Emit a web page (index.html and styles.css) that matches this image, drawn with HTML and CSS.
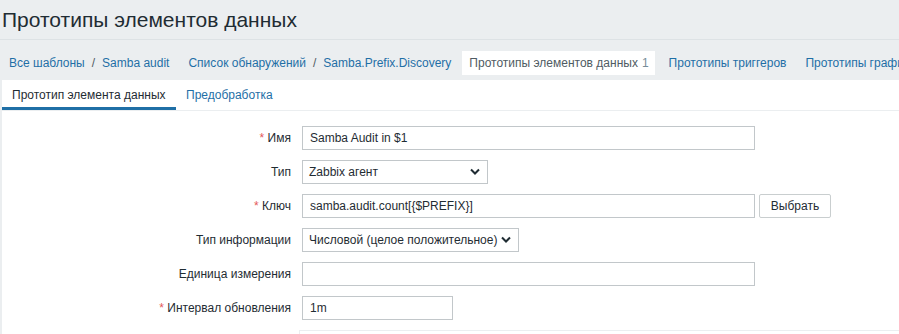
FILE: index.html
```html
<!DOCTYPE html>
<html lang="ru">
<head>
<meta charset="utf-8">
<title>Прототипы элементов данных</title>
<link rel="stylesheet" href="styles.css">
</head>
<body>
<header class="page-header">
  <h1 class="page-title">Прототипы элементов данных</h1>
</header>
<nav class="breadcrumbs">
  <div class="crumb-group">
    <a class="link" href="#">Все шаблоны</a><span class="sep">/</span><a class="link" href="#">Samba audit</a>
  </div>
  <div class="crumb-group">
    <a class="link" href="#">Список обнаружений</a><span class="sep">/</span><a class="link" href="#">Samba.Prefix.Discovery</a>
  </div>
  <div class="crumb-group selected">
    <span class="sel-text">Прототипы элементов данных</span><span class="count">1</span>
  </div>
  <div class="crumb-group">
    <a class="link" href="#">Прототипы триггеров</a>
  </div>
  <div class="crumb-group">
    <a class="link" href="#">Прототипы графиков</a>
  </div>
</nav>
<main class="content">
  <div class="tabs">
    <a class="tab active" href="#">Прототип элемента данных</a>
    <a class="tab" href="#">Предобработка</a>
  </div>
  <form class="form">
    <div class="row">
      <label class="label"><span class="req">*</span> Имя</label>
      <div class="field"><input class="input wide" type="text" value="Samba Audit in $1"></div>
    </div>
    <div class="row">
      <label class="label">Тип</label>
      <div class="field">
        <div class="select sel-type"><span>Zabbix агент</span><svg class="chev" viewBox="0 0 10 8" width="10" height="8"><path d="M1 1.5 L5 5.5 L9 1.5" fill="none" stroke="#1f2c33" stroke-width="2"/></svg></div>
      </div>
    </div>
    <div class="row">
      <label class="label"><span class="req">*</span> Ключ</label>
      <div class="field"><input class="input wide" type="text" value="samba.audit.count[{$PREFIX}]"><button class="btn" type="button">Выбрать</button></div>
    </div>
    <div class="row">
      <label class="label">Тип информации</label>
      <div class="field">
        <div class="select sel-info"><span>Числовой (целое положительное)</span><svg class="chev" viewBox="0 0 10 8" width="10" height="8"><path d="M1 1.5 L5 5.5 L9 1.5" fill="none" stroke="#1f2c33" stroke-width="2"/></svg></div>
      </div>
    </div>
    <div class="row">
      <label class="label">Единица измерения</label>
      <div class="field"><input class="input wide" type="text" value=""></div>
    </div>
    <div class="row">
      <label class="label"><span class="req">*</span> Интервал обновления</label>
      <div class="field"><input class="input short" type="text" value="1m"></div>
    </div>
    <div class="row next">
      <div class="label"></div>
      <div class="field"><div class="next-box"></div></div>
    </div>
  </form>
</main>
</body>
</html>
```

FILE: styles.css
```css
* { box-sizing: border-box; }
html, body { margin: 0; padding: 0; }
body {
  width: 899px;
  height: 334px;
  overflow: hidden;
  background: #ebeef0;
  font-family: "Liberation Sans", Arial, sans-serif;
  font-size: 12px;
  color: #1f2c33;
}
.page-header {
  height: 40px;
  border-bottom: 1px solid #dde2e5;
  padding-left: 2px;
  display: flex;
  align-items: center;
}
.page-title {
  margin: 0;
  font-size: 21px;
  font-weight: normal;
  line-height: 24px;
}
.breadcrumbs {
  height: 40px;
  padding-top: 6px;
  display: flex;
  align-items: center;
  padding-left: 9px;
  white-space: nowrap;
  overflow: hidden;
}
.crumb-group {
  display: flex;
  align-items: center;
  height: 24px;
  margin-right: 19px;
  flex: none;
}
.crumb-group.selected {
  background: #ffffff;
  padding: 0 6px 0 7px;
  margin-right: 14px;
  margin-left: -8px;
}
.link { color: #1f6fa6; text-decoration: none; }
.sep { color: #4f5b63; margin: 0 7px; }
.sel-text { color: #4f5b63; }
.count { color: #768d99; margin-left: 4px; }
.content {
  margin-left: 2px;
  background: #ffffff;
  height: 260px;
}
.tabs {
  height: 31px;
  display: flex;
  border-bottom: 1px solid #ebeef0;
}
.tab {
  display: block;
  height: 30px;
  line-height: 31px;
  padding: 0 10px;
  color: #1f6fa6;
  text-decoration: none;
}
.tab.active {
  color: #1f2c33;
  border-bottom: 3px solid #1f6fa6;
  width: 174px;
}
.form {
  padding-top: 15px;
  display: flex;
  flex-direction: column;
  gap: 10px;
}
.row {
  display: flex;
  align-items: center;
  height: 24px;
}
.label {
  width: 290px;
  text-align: right;
  padding-right: 1px;
  color: #1f2c33;
}
.req { color: #e45959; }
.field {
  margin-left: 10px;
  display: flex;
  align-items: center;
}
.input {
  height: 24px;
  border: 1px solid #c2c7ca;
  border-radius: 0;
  padding: 0 7px;
  font-family: "Liberation Sans", Arial, sans-serif;
  font-size: 12px;
  color: #1f2c33;
  background: #fff;
  outline: none;
}
.wide { width: 453px; }
.short { width: 151px; }
.btn {
  margin-left: 4px;
  height: 24px;
  width: 72px;
  border: 1px solid #c9cecf;
  border-radius: 2px;
  background: #ffffff;
  font-family: "Liberation Sans", Arial, sans-serif;
  font-size: 12px;
  color: #1f2c33;
  padding: 0;
}
.select {
  height: 24px;
  border: 1px solid #c2c7ca;
  display: flex;
  align-items: center;
  justify-content: space-between;
  padding: 0 7px 0 6px;
  background: #fff;
  gap: 4px;
  white-space: nowrap;
}
.sel-type { width: 186px; }
.sel-info { width: 217px; }
.chev { display: block; flex: none; }
.next { height: 14px; align-items: flex-start; }
.next .field { flex: 1; }
.next-box {
  width: 600px;
  height: 14px;
  border-top: 1px solid #ebeef0;
  border-left: 1px solid #ebeef0;
}
```
